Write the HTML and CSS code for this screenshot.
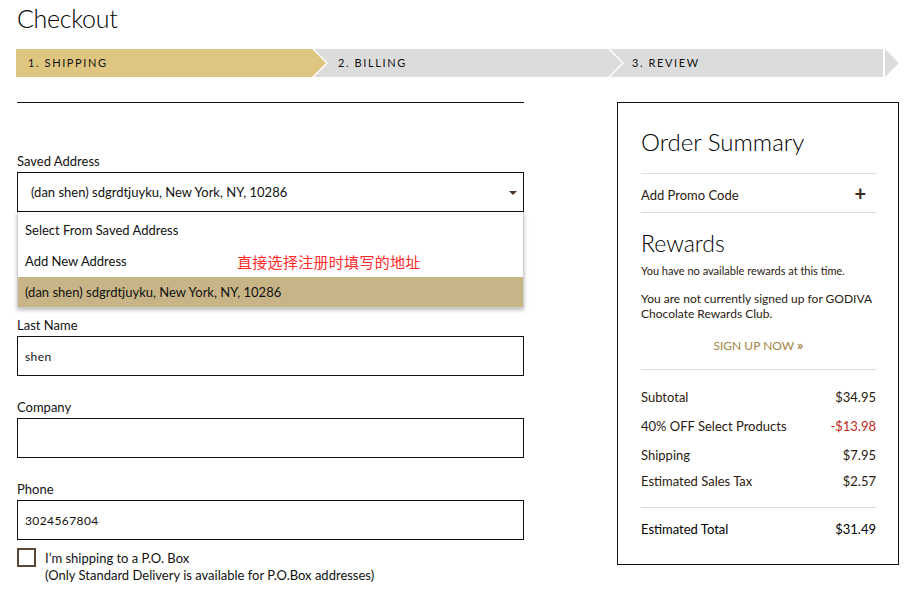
FILE: index.html
```html
<!DOCTYPE html>
<html lang="en">
<head>
<meta charset="utf-8">
<title>Checkout</title>
<link rel="stylesheet" href="styles.css">
</head>
<body>
<div class="page">
  <h1 class="title">Checkout</h1>
  <ol class="steps">
    <li class="step step-first active">1. SHIPPING</li>
    <li class="step">2. BILLING</li>
    <li class="step step-last">3. REVIEW</li>
  </ol>
  <div class="main">
    <form class="form">
      <div class="field field-saved">
        <label class="label">Saved Address</label>
        <div class="select">
          <span class="select-value">(dan shen) sdgrdtjuyku, New York, NY, 10286</span>
          <span class="caret"></span>
          <ul class="dropdown">
            <li class="option">Select From Saved Address</li>
            <li class="option">Add New Address <span class="note">直接选择注册时填写的地址</span></li>
            <li class="option selected">(dan shen) sdgrdtjuyku, New York, NY, 10286</li>
          </ul>
        </div>
      </div>
      <div class="field field-covered">
        <label class="label">First Name</label>
        <div class="input">dan</div>
      </div>
      <div class="field">
        <label class="label">Last Name</label>
        <div class="input">shen</div>
      </div>
      <div class="field">
        <label class="label">Company</label>
        <div class="input"></div>
      </div>
      <div class="field">
        <label class="label">Phone</label>
        <div class="input">3024567804</div>
      </div>
      <div class="check">
        <span class="box"></span>
        <span class="check-text">I’m shipping to a P.O. Box<br>(Only Standard Delivery is available for P.O.Box addresses)</span>
      </div>
    </form>
    <aside class="summary">
      <h2 class="sum-title">Order Summary</h2>
      <div class="promo"><span>Add Promo Code</span><span class="plus">+</span></div>
      <h2 class="rewards-title">Rewards</h2>
      <p class="small">You have no available rewards at this time.</p>
      <p class="club">You are not currently signed up for GODIVA Chocolate Rewards Club.</p>
      <div class="signup">SIGN UP NOW <span class="raquo">»</span></div>
      <div class="totals">
        <div class="row"><span>Subtotal</span><span>$34.95</span></div>
        <div class="row"><span>40% OFF Select Products</span><span class="neg">-$13.98</span></div>
        <div class="row"><span>Shipping</span><span>$7.95</span></div>
        <div class="row"><span>Estimated Sales Tax</span><span>$2.57</span></div>
      </div>
      <div class="row total"><span>Estimated Total</span><span>$31.49</span></div>
    </aside>
  </div>
</div>
</body>
</html>
```

FILE: styles.css
```css
* { box-sizing: border-box; }
html, body { margin: 0; padding: 0; background: #fff; }
body {
  font-family: "Lato", "Noto Sans CJK SC", sans-serif;
  font-weight: 400;
  color: #111;
  font-size: 13px;
}
.page { padding: 0 0 0 16px; width: 923px; }
.title {
  margin: 0;
  padding: 3px 0 0 1px;
  font-size: 25px;
  line-height: 30px;
  font-weight: 300;
  color: #000;
  letter-spacing: -0.3px;
}
.steps {
  list-style: none;
  margin: 16px 0 0 0;
  padding: 0;
  display: flex;
  height: 28px;
}
.step {
  height: 28px;
  line-height: 28px;
  font-size: 11px;
  font-weight: 400;
  letter-spacing: 1.6px;
  color: #111;
  background: #dcdcdc;
  width: 308px;
  margin-left: -12px;
  padding-left: 24px;
  clip-path: polygon(0 0, calc(100% - 14px) 0, 100% 50%, calc(100% - 14px) 100%, 0 100%, 14px 50%);
}
.step-first {
  margin-left: 0;
  width: 310px;
  padding-left: 12px;
  clip-path: polygon(0 0, calc(100% - 14px) 0, 100% 50%, calc(100% - 14px) 100%, 0 100%);
  position: relative;
  z-index: 2;
}
.step.active { background: #dfc680; }
.step-last {
  width: 289px;
  padding-left: 22px;
  background: linear-gradient(to right, #dcdcdc 0, #dcdcdc 273px, #fff 273px, #fff 275px, #dcdcdc 275px);
}
.main {
  display: flex;
  margin-top: 25px;
  align-items: flex-start;
}
.form {
  width: 507px;
  margin-left: 1px;
  border-top: 1px solid #111;
  padding-top: 49px;
}
.field { margin-bottom: 22px; }
.field-saved { position: relative; z-index: 5; }
.field-covered { visibility: hidden; }
.label {
  display: block;
  height: 18px;
  line-height: 18px;
  margin-bottom: 2px;
  font-size: 13px;
  color: #111;
}
.input, .select {
  height: 40px;
  border: 1px solid #111;
  display: flex;
  align-items: center;
  padding-left: 7px;
  font-size: 12px;
  color: #111;
  letter-spacing: 0.4px;
}
.select {
  position: relative;
  padding-left: 13px;
  font-size: 13px;
  letter-spacing: 0;
}
.caret {
  position: absolute;
  right: 6px;
  top: 18px;
  border-left: 4px solid transparent;
  border-right: 4px solid transparent;
  border-top: 4px solid #4a3428;
}
.dropdown {
  position: absolute;
  left: -1px;
  right: -1px;
  top: 39px;
  margin: 0;
  padding: 3px 0 0 0;
  list-style: none;
  background: #fff;
  border: 1px solid #cfcfcf;
  border-top: none;
  box-shadow: 0 2px 4px rgba(0,0,0,0.28);
  visibility: visible;
}
.option {
  height: 31px;
  line-height: 30px;
  padding-left: 7px;
  font-size: 13px;
  color: #111;
  position: relative;
}
.option.selected { background: #c8b587; height: 30px; line-height: 31px; }
.note {
  position: absolute;
  left: 219px;
  top: 1px;
  color: #ff2a2a;
  font-family: "Noto Sans CJK SC", sans-serif;
  font-weight: 400;
  font-size: 15px;
  letter-spacing: 0.3px;
}
.check {
  display: flex;
  align-items: flex-start;
  margin-top: -13px;
}
.box {
  width: 19px;
  height: 19px;
  border: 2px solid #5b4636;
  flex: none;
  margin-top: -1px;
  background: #fff;
}
.check-text {
  margin-left: 9px;
  font-size: 13px;
  line-height: 17px;
  color: #111;
  padding-top: 1px;
}
.summary {
  margin-left: 93px;
  width: 282px;
  height: 463px;
  border: 1px solid #111;
  padding: 23px 22px 0 23px;
  color: #2b1a10;
}
.sum-title {
  margin: 0;
  font-size: 24px;
  line-height: 32px;
  font-weight: 300;
  color: #000;
  padding-bottom: 15px;
  border-bottom: 1px solid #dcdcdc;
}
.promo {
  display: flex;
  justify-content: space-between;
  align-items: center;
  height: 39px;
  padding-top: 3px;
  border-bottom: 1px solid #dcdcdc;
  font-size: 13px;
  color: #2b1a10;
}
.plus {
  font-size: 20px;
  font-weight: 700;
  margin-right: 10px;
  line-height: 1;
  margin-top: -3px;
  color: #3b2a20;
}
.rewards-title {
  margin: 0;
  padding-top: 15px;
  font-size: 23px;
  line-height: 30px;
  font-weight: 300;
  color: #000;
}
.small {
  margin: 5px 0 0 0;
  font-size: 11px;
  line-height: 16px;
  color: #2b1a10;
}
.club {
  margin: 12px 0 0 0;
  font-size: 12px;
  line-height: 15px;
  color: #2b1a10;
}
.signup {
  text-align: center;
  margin-top: 15px;
  font-size: 12px;
  font-weight: 400;
  color: #a08645;
  border-bottom: 1px solid #dcdcdc;
  padding-bottom: 16px;
}
.raquo { font-weight: 700; font-size: 14px; }
.totals {
  padding-top: 18px;
  padding-bottom: 17px;
  border-bottom: 1px solid #dcdcdc;
}
.row {
  display: flex;
  justify-content: space-between;
  font-size: 13px;
  line-height: 18px;
  color: #2b1a10;
  margin-bottom: 11px;
}
.row:nth-child(3) { margin-bottom: 8px; }
.row:last-child { margin-bottom: 0; }
.neg { color: #c0261a; }
.total { margin-top: 12px; color: #000; }
```
